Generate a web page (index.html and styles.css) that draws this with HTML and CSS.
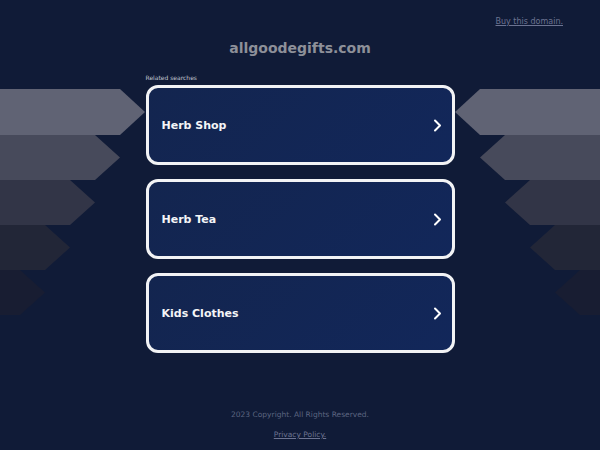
FILE: index.html
```html
<!DOCTYPE html>
<html>
<head>
<meta charset="utf-8">
<link rel="stylesheet" href="styles.css">
</head>
<body>
<div class="page">
  <svg class="deco deco-left" width="150" height="240" viewBox="0 0 150 240" aria-hidden="true">
    <polygon points="0,0 120,0 145,23 120,46 0,46" fill="#606374"/>
    <polygon points="0,46 95,46 120,68.5 95,91 0,91" fill="#474a5b"/>
    <polygon points="0,91 70,91 95,113.5 70,136 0,136" fill="#323547"/>
    <polygon points="0,136 45,136 70,158.5 45,181 0,181" fill="#222637"/>
    <polygon points="0,181 20,181 45,203.5 20,226 0,226" fill="#181d32"/>
  </svg>
  <svg class="deco deco-right" width="150" height="240" viewBox="0 0 150 240" aria-hidden="true">
    <polygon points="150,0 30,0 5,23 30,46 150,46" fill="#606374"/>
    <polygon points="150,46 55,46 30,68.5 55,91 150,91" fill="#474a5b"/>
    <polygon points="150,91 80,91 55,113.5 80,136 150,136" fill="#323547"/>
    <polygon points="150,136 105,136 80,158.5 105,181 150,181" fill="#222637"/>
    <polygon points="150,181 130,181 105,203.5 130,226 150,226" fill="#181d32"/>
  </svg>

  <div class="topbar"><a class="buy" href="#">Buy this domain.</a></div>
  <h1 class="domain">allgoodegifts.com</h1>

  <div class="results">
    <div class="label">Related searches</div>
    <div class="cards">
      <a class="card" href="#"><span>Herb Shop</span>
        <svg class="chev" width="9" height="13" viewBox="0 0 9 13"><polyline points="2,1.5 7,6.5 2,11.5" fill="none" stroke="#ffffff" stroke-width="2" stroke-linecap="round" stroke-linejoin="round"/></svg></a>
      <a class="card" href="#"><span>Herb Tea</span>
        <svg class="chev" width="9" height="13" viewBox="0 0 9 13"><polyline points="2,1.5 7,6.5 2,11.5" fill="none" stroke="#ffffff" stroke-width="2" stroke-linecap="round" stroke-linejoin="round"/></svg></a>
      <a class="card" href="#"><span>Kids Clothes</span>
        <svg class="chev" width="9" height="13" viewBox="0 0 9 13"><polyline points="2,1.5 7,6.5 2,11.5" fill="none" stroke="#ffffff" stroke-width="2" stroke-linecap="round" stroke-linejoin="round"/></svg></a>
    </div>
  </div>

  <div class="footer">
    <div class="copy">2023 Copyright. All Rights Reserved.</div>
    <a class="privacy" href="#">Privacy Policy.</a>
  </div>
</div>
</body>
</html>
```
FILE: styles.css
```css
html, body {
  margin: 0;
  padding: 0;
  background: #101b37;
}
body {
  font-family: "DejaVu Sans", "Liberation Sans", sans-serif;
}
.page {
  position: relative;
  width: 600px;
  height: 450px;
  overflow: hidden;
  display: flex;
  flex-direction: column;
}
.deco {
  position: absolute;
  top: 89px;
  z-index: 0;
}
.deco-left { left: 0; }
.deco-right { right: 0; }
.topbar {
  height: 38px;
  line-height: 38px;
  padding-bottom: 2px;
  text-align: right;
  padding-right: 37px;
  position: relative;
  z-index: 1;
}
.buy {
  font-size: 8px;
  color: #6c7391;
  text-decoration: underline;
}
.domain {
  margin: 0;
  height: 16px;
  line-height: 16px;
  font-size: 14px;
  font-weight: bold;
  color: #8d9099;
  text-align: center;
  position: relative;
  z-index: 1;
}
.results {
  width: 309px;
  margin: 18px auto 0;
  position: relative;
  z-index: 1;
}
.label {
  font-size: 6px;
  line-height: 8px;
  color: #c3c7d0;
  margin-bottom: 3px;
}
.cards {
  display: flex;
  flex-direction: column;
  gap: 14px;
}
.card {
  box-sizing: border-box;
  height: 80px;
  border: 3px solid #f2f3f5;
  border-radius: 12px;
  background: linear-gradient(135deg, #13254f 0%, #12275a 100%);
  display: flex;
  align-items: center;
  justify-content: space-between;
  padding: 0 10px 0 13px;
  text-decoration: none;
  color: #f4f5f7;
  font-size: 11px;
  font-weight: bold;
}
.chev { display: block; }
.footer {
  margin-top: 57px;
  text-align: center;
  position: relative;
  z-index: 1;
}
.copy {
  font-size: 7.5px;
  line-height: 10px;
  color: #5c6580;
}
.privacy {
  display: inline-block;
  margin-top: 10px;
  font-size: 7.5px;
  line-height: 10px;
  color: #6c7391;
  text-decoration: underline;
}
```
